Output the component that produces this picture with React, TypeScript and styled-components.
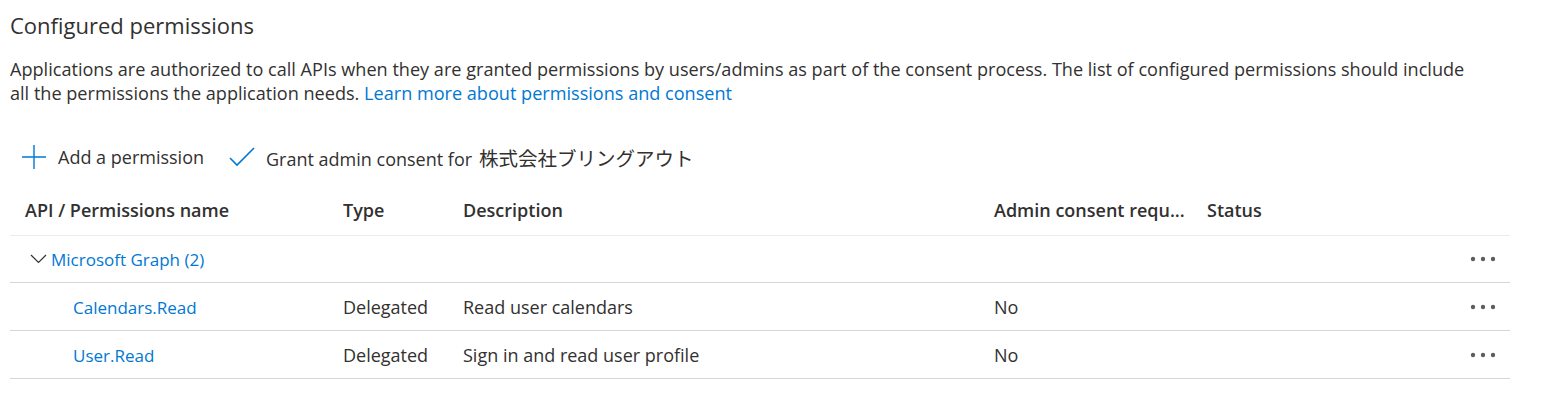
import React from 'react'
import styled, { createGlobalStyle } from 'styled-components'

const GlobalStyle = createGlobalStyle`
  body {
    margin: 0;
    background: #ffffff;
    font-family: 'Open Sans', 'Noto Sans CJK JP', sans-serif;
    color: #323130;
  }
`

const Page = styled.div`
  padding: 9px 34px 0 10px;
`
const Title = styled.h2`
  margin: 0;
  font-size: 22px;
  font-weight: 400;
  line-height: 32px;
`
const Intro = styled.p`
  margin: 16px 0 0;
  max-width: 1472px;
  font-size: 18.1px;
  line-height: 24px;
`
const Link = styled.a<{ $size?: number }>`
  color: #0078d4;
  text-decoration: none;
  font-size: ${(p) => (p.$size ? `${p.$size}px` : 'inherit')};
`
const Toolbar = styled.div`
  display: flex;
  align-items: center;
  gap: 25px;
  margin-top: 30px;
  padding-left: 11px;
  height: 44px;
`
const ToolButton = styled.button`
  display: flex;
  align-items: center;
  gap: 11px;
  border: none;
  background: none;
  padding: 0;
  font-family: inherit;
  font-size: 18px;
  color: #323130;
`
const Company = styled.span`
  margin-left: 7px;
  font-size: 19.5px;
`
const Table = styled.div`
  width: 1500px;
`
const Row = styled.div<{ $header?: boolean; $group?: boolean }>`
  display: grid;
  grid-template-columns: 323px 120px 531px 213px 1fr 70px;
  align-items: center;
  height: ${(p) => (p.$header ? '50px' : p.$group ? '46px' : '47px')};
  padding-top: ${(p) => (p.$header ? '6px' : '0')};
  border-bottom: 1px solid ${(p) => (p.$header ? '#edebe9' : '#d6d6d6')};
  font-size: 18px;
  font-weight: ${(p) => (p.$header ? 600 : 400)};
`
const Cell = styled.div<{ $indent?: number }>`
  padding-left: ${(p) => p.$indent ?? 10}px;
  white-space: nowrap;
  overflow: hidden;
`
const Group = styled.div`
  display: flex;
  align-items: center;
  gap: 4px;
  padding-left: 20px;
  color: #0078d4;
  font-size: 17px;
  grid-column: 1 / 6;
`
const Actions = styled.div`
  display: flex;
  justify-content: flex-end;
  padding-right: 14px;
`

const PlusIcon = () => (
  <svg width="26" height="26" viewBox="0 0 26 26">
    <path d="M13 1v24M1 13h24" stroke="#0078d4" strokeWidth="1.4" fill="none" />
  </svg>
)
const CheckIcon = () => (
  <svg width="26" height="20" viewBox="0 0 26 20">
    <path d="M1 11l7 7L25 1" stroke="#0078d4" strokeWidth="1.6" fill="none" />
  </svg>
)
const Chevron = () => (
  <svg width="17" height="10" viewBox="0 0 17 10">
    <path d="M1 1l7.5 7.5L16 1" stroke="#323130" strokeWidth="1.2" fill="none" />
  </svg>
)
const More = () => (
  <svg width="26" height="6" viewBox="0 0 26 6">
    <circle cx="3" cy="3" r="2.2" fill="#605e5c" />
    <circle cx="13" cy="3" r="2.2" fill="#605e5c" />
    <circle cx="23" cy="3" r="2.2" fill="#605e5c" />
  </svg>
)

const permissions = [
  { name: 'Calendars.Read', type: 'Delegated', description: 'Read user calendars', admin: 'No' },
  { name: 'User.Read', type: 'Delegated', description: 'Sign in and read user profile', admin: 'No' },
]

const App = () => {
  return (
    <Page>
      <GlobalStyle />
      <Title>Configured permissions</Title>
      <Intro>
        Applications are authorized to call APIs when they are granted permissions by users/admins as part of
        the consent process. The list of configured permissions should include all the permissions the
        application needs. <Link href="#">Learn more about permissions and consent</Link>
      </Intro>
      <Toolbar>
        <ToolButton>
          <PlusIcon />
          Add a permission
        </ToolButton>
        <ToolButton>
          <CheckIcon />
          <span>
            Grant admin consent for<Company>株式会社ブリングアウト</Company>
          </span>
        </ToolButton>
      </Toolbar>
      <Table>
        <Row $header>
          <Cell $indent={15}>API / Permissions name</Cell>
          <Cell>Type</Cell>
          <Cell>Description</Cell>
          <Cell>Admin consent requ...</Cell>
          <Cell>Status</Cell>
          <Cell />
        </Row>
        <Row $group>
          <Group>
            <Chevron />
            Microsoft Graph (2)
          </Group>
          <Actions>
            <More />
          </Actions>
        </Row>
        {permissions.map((item) => (
          <Row key={item.name}>
            <Cell $indent={63}>
              <Link href="#" $size={17}>
                {item.name}
              </Link>
            </Cell>
            <Cell>{item.type}</Cell>
            <Cell>{item.description}</Cell>
            <Cell>{item.admin}</Cell>
            <Cell />
            <Actions>
              <More />
            </Actions>
          </Row>
        ))}
      </Table>
    </Page>
  )
}

export default App
